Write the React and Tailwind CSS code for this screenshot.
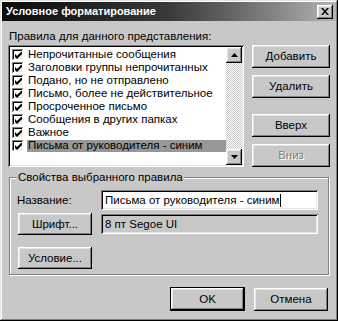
import React from "react";

const raised =
  "shadow-[inset_-1px_-1px_0_#000,inset_1px_1px_0_#fff,inset_-2px_-2px_0_#808080,inset_2px_2px_0_#e4e4e4]";
const sunken =
  "shadow-[inset_1px_1px_0_#808080,inset_-1px_-1px_0_#fff,inset_2px_2px_0_#000,inset_-2px_-2px_0_#e4e4e4]";

function Btn({ children, className = "", disabled = false }) {
  return (
    <div
      className={`flex items-center justify-center bg-[#c8c8c8] ${raised} ${className} ${
        disabled ? "text-[#808080] [text-shadow:1px_1px_0_#fff]" : "text-black"
      }`}
    >
      {children}
    </div>
  );
}

function Check() {
  return (
    <div className={`w-[11px] h-[11px] bg-white flex items-center justify-center ${sunken}`}>
      <svg width="7" height="7" viewBox="0 0 7 7" className="ml-[1px] mt-[1px]">
        <path d="M0 2 L0 5 L2 7 L7 2 L7 -1 L2 4 Z" fill="#000" />
      </svg>
    </div>
  );
}

const items = [
  "Непрочитанные сообщения",
  "Заголовки группы непрочитанных",
  "Подано, но не отправлено",
  "Письмо, более не действительное",
  "Просроченное письмо",
  "Сообщения в других папках",
  "Важное",
  "Письма от руководителя - синим",
];

export default function App() {
  return (
    <div
      className={`w-[338px] h-[321px] bg-[#c8c8c8] p-[2px] flex flex-col text-[11.5px] leading-[13px] text-black font-['Liberation_Sans',Arial,sans-serif] shadow-[inset_-1px_-1px_0_#000,inset_1px_1px_0_#e4e4e4,inset_-2px_-2px_0_#808080,inset_2px_2px_0_#fff]`}
    >
      {/* title bar */}
      <div className="h-[19px] flex items-center justify-between pl-[4px] pr-[3px] bg-gradient-to-r from-[#0c0c0c] via-[#3a3a3a] to-[#b4b4b4]">
        <span className="text-white font-bold text-[11px]">Условное форматирование</span>
        <div className={`w-[16px] h-[14px] bg-[#c8c8c8] flex items-center justify-center ${raised}`}>
          <svg width="8" height="7" viewBox="0 0 8 7">
            <path d="M0 0 L2 0 L4 2.5 L6 0 L8 0 L5 3.5 L8 7 L6 7 L4 4.5 L2 7 L0 7 L3 3.5 Z" fill="#000" />
          </svg>
        </div>
      </div>

      <div className="flex flex-col pl-[6px]">
        <div className="mt-[9px] ml-[1px]">Правила для данного представления:</div>

        <div className="mt-[2px] flex">
          {/* listbox */}
          <div className={`w-[236px] h-[122px] bg-white p-[2px] flex ${sunken}`}>
            <div className="flex-1 flex flex-col pt-[1px]">
              {items.map((t, i) => (
                <div key={i} className="h-[13px] flex items-center pl-[2px]">
                  <Check />
                  <span
                    className={`ml-[4px] pl-[1px] pr-[2px] flex-1 h-[12px] flex items-center whitespace-nowrap ${
                      i === 7 ? "bg-[#979797]" : ""
                    }`}
                  >
                    {t}
                  </span>
                </div>
              ))}
            </div>
            <div className="w-[16px] flex flex-col bg-[repeating-conic-gradient(#c8c8c8_0_25%,#fff_0_50%)] bg-[length:2px_2px]">
              <div className={`h-[16px] bg-[#c8c8c8] flex items-center justify-center ${raised}`}>
                <svg width="7" height="4" viewBox="0 0 7 4">
                  <path d="M3.5 0 L7 4 L0 4 Z" fill="#000" />
                </svg>
              </div>
              <div className="flex-1" />
              <div className={`h-[16px] bg-[#c8c8c8] flex items-center justify-center ${raised}`}>
                <svg width="7" height="4" viewBox="0 0 7 4">
                  <path d="M0 0 L7 0 L3.5 4 Z" fill="#000" />
                </svg>
              </div>
            </div>
          </div>

          {/* buttons */}
          <div className="ml-[8px] w-[78px] flex flex-col">
            <Btn className="h-[23px]">Добавить</Btn>
            <Btn className="h-[23px] mt-[7px]">Удалить</Btn>
            <Btn className="h-[23px] mt-[16px]">Вверх</Btn>
            <Btn className="h-[23px] mt-[7px]" disabled>
              Вниз
            </Btn>
          </div>
        </div>

        {/* group box */}
        <div className="mt-[10px] ml-[1px] w-[320px] h-[98px] relative border border-[#808080] shadow-[1px_1px_0_#fff,inset_1px_1px_0_#fff]">
          <div className="absolute -top-[7px] left-[7px] bg-[#c8c8c8] px-[1px]">
            Свойства выбранного правила
          </div>
          <div className="pl-[7px] pt-[12px] grid grid-cols-[84px_217px]">
            <div className="h-[20px] flex items-center">Название:</div>
            <div className={`h-[20px] bg-white flex items-center pl-[4px] ${sunken}`}>
              <span>Письма от руководителя - синим</span>
              <span className="w-px h-[13px] bg-black" />
            </div>

            <Btn className="mt-[3px] h-[22px] w-[74px] ml-[1px]">Шрифт...</Btn>
            <div className={`mt-[4px] h-[20px] flex items-center pl-[4px] ${sunken}`}>8 пт Segoe UI</div>

            <Btn className="mt-[12px] h-[22px] w-[74px] ml-[1px]">Условие...</Btn>
            <div />
          </div>
        </div>

        {/* bottom buttons */}
        <div className="mt-[12px] flex items-center">
          <div className="ml-[162px] w-[75px] h-[24px] border border-black flex">
            <Btn className="flex-1">OK</Btn>
          </div>
          <Btn className="ml-[9px] w-[74px] h-[23px]">Отмена</Btn>
        </div>
      </div>
    </div>
  );
}
